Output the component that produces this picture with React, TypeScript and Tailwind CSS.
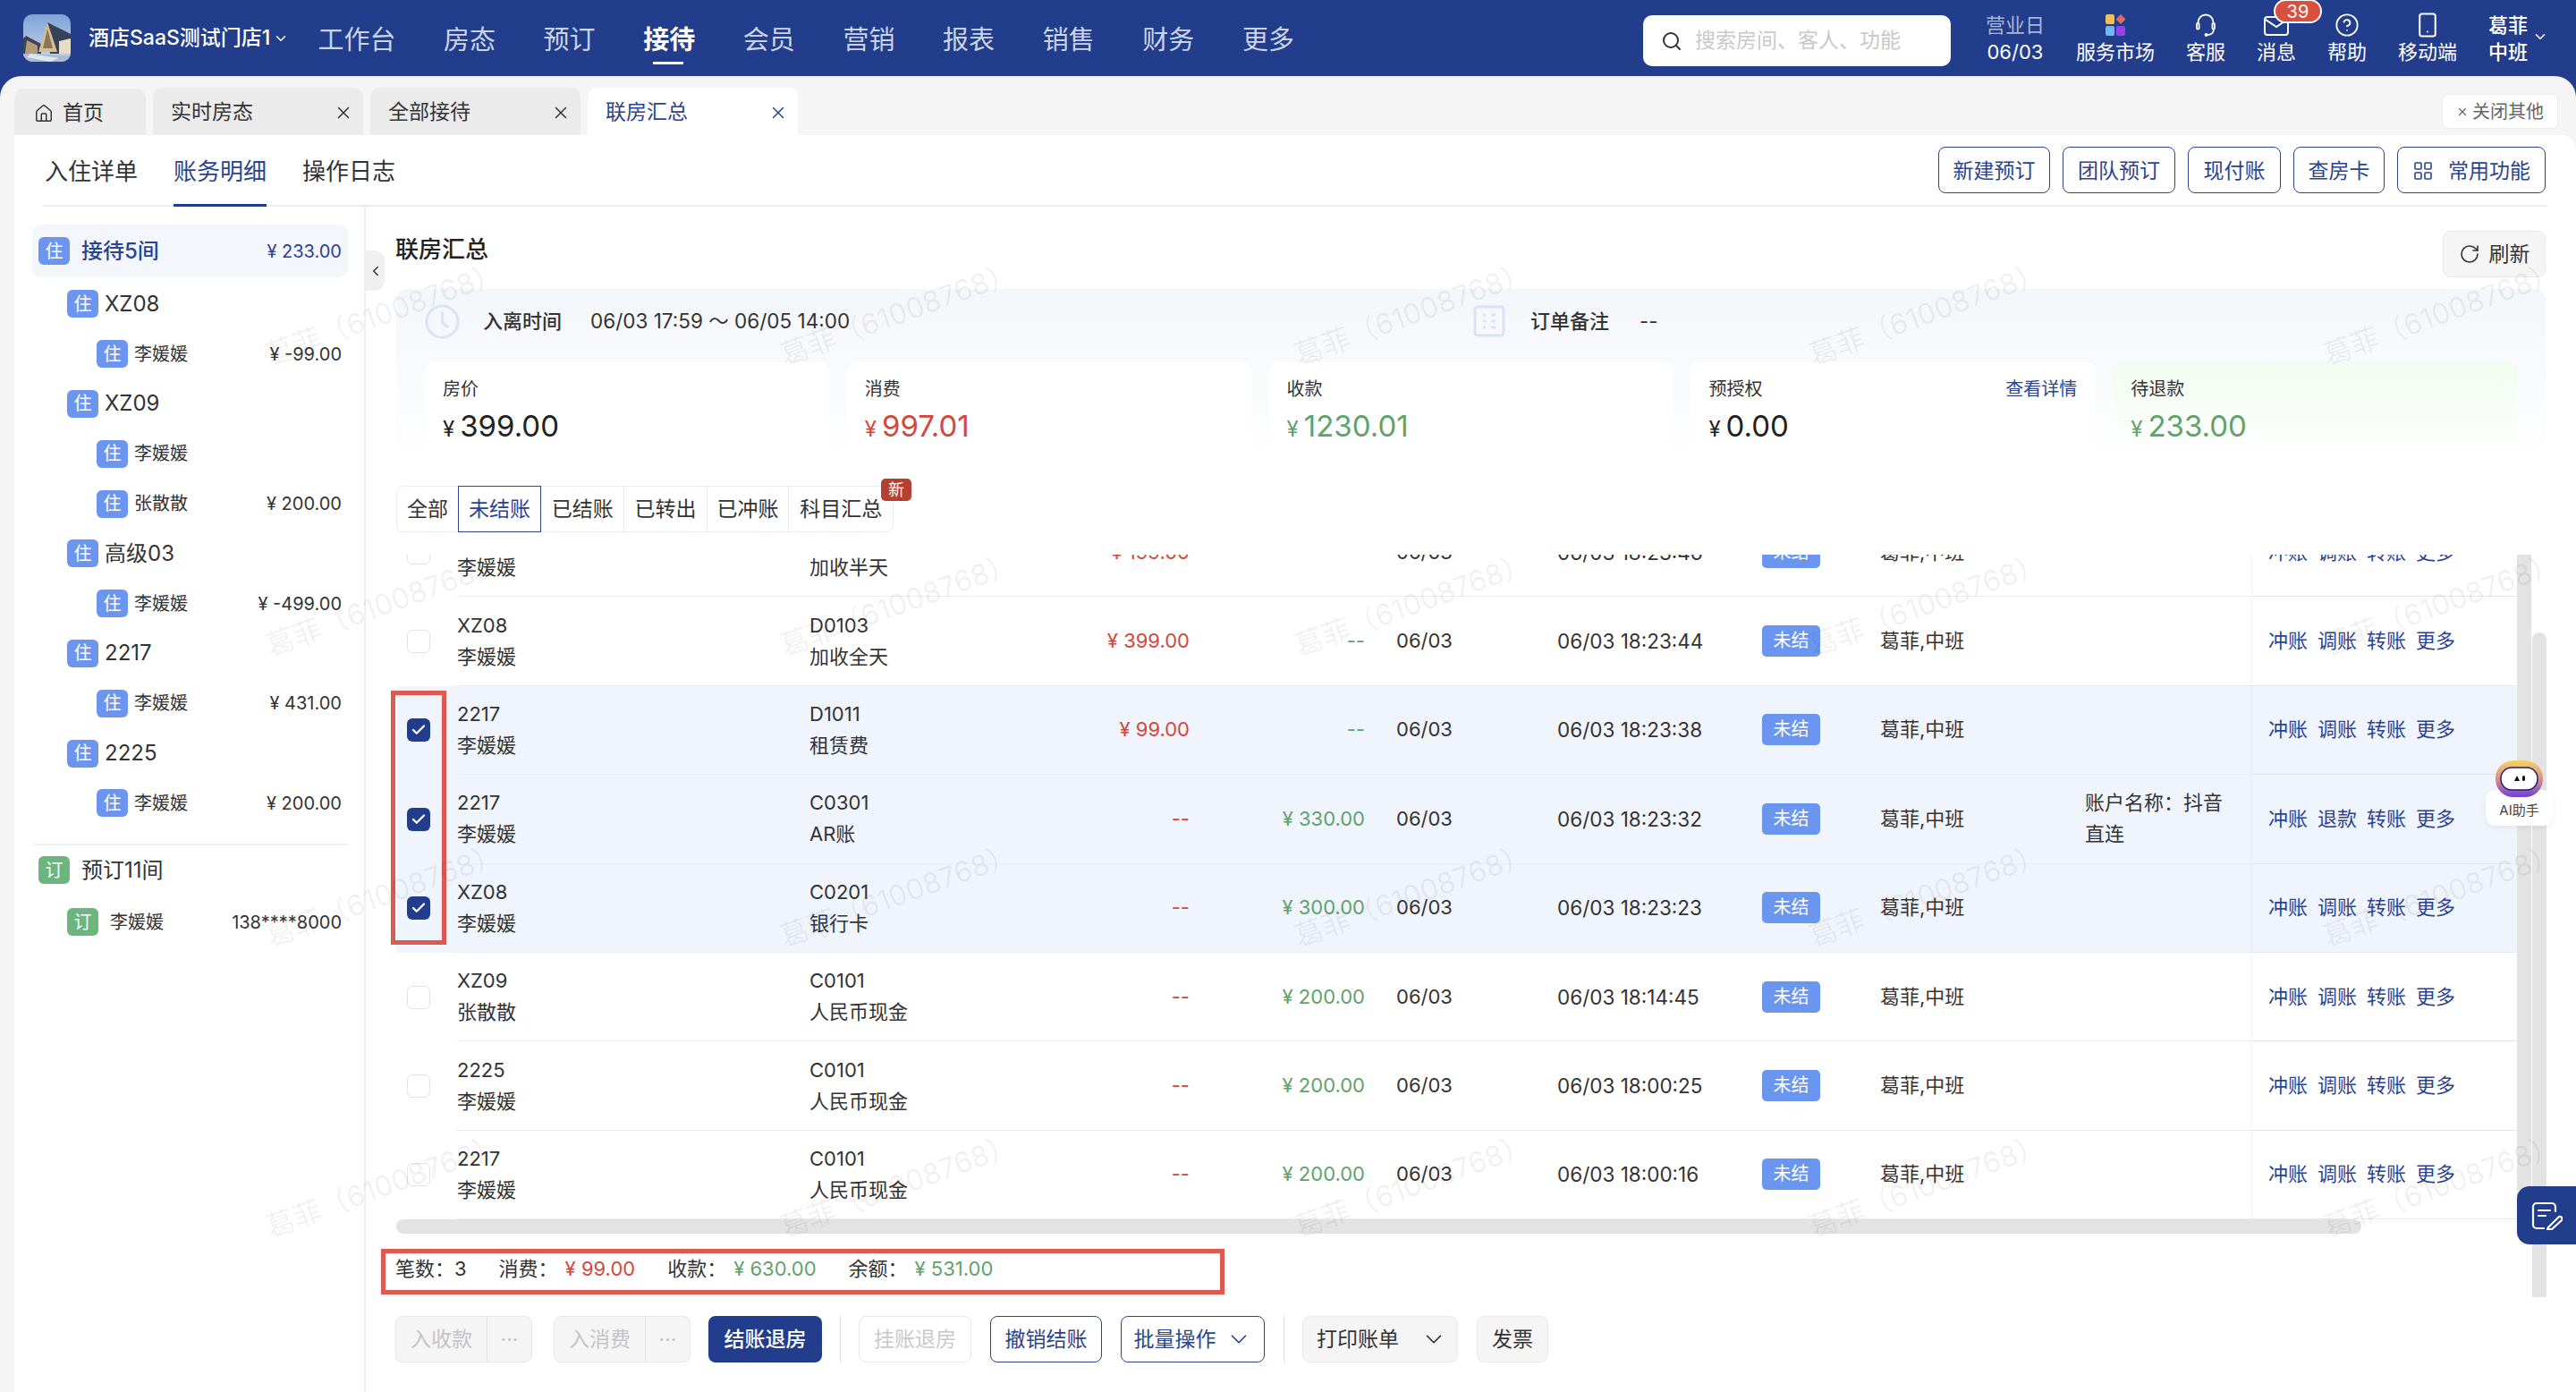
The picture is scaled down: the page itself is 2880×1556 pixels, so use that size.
import { ChevronDown, ChevronLeft, CircleHelp, Check, Home, LayoutGrid, RotateCw, Search, Smartphone, X } from "lucide-react";
import clsx from "clsx";

const navItems = ["工作台", "房态", "预订", "接待", "会员", "营销", "报表", "销售", "财务", "更多"];

interface GuestRow {
  level: number;
  name: string;
  amount?: string;
}

const guests: GuestRow[] = [
  { level: 1, name: "XZ08" },
  { level: 2, name: "李媛媛", amount: "¥ -99.00" },
  { level: 1, name: "XZ09" },
  { level: 2, name: "李媛媛" },
  { level: 2, name: "张散散", amount: "¥ 200.00" },
  { level: 1, name: "高级03" },
  { level: 2, name: "李媛媛", amount: "¥ -499.00" },
  { level: 1, name: "2217" },
  { level: 2, name: "李媛媛", amount: "¥ 431.00" },
  { level: 1, name: "2225" },
  { level: 2, name: "李媛媛", amount: "¥ 200.00" },
];

interface Bill {
  room: string;
  guest: string;
  code: string;
  item: string;
  consume: string;
  pay: string;
  time: string;
  note?: string;
  refund?: boolean;
  selected?: boolean;
}

const bills: Bill[] = [
  { room: "XZ08", guest: "李媛媛", code: "D0102", item: "加收半天", consume: "¥ 199.00", pay: "--", time: "06/03 18:23:46" },
  { room: "XZ08", guest: "李媛媛", code: "D0103", item: "加收全天", consume: "¥ 399.00", pay: "--", time: "06/03 18:23:44" },
  { room: "2217", guest: "李媛媛", code: "D1011", item: "租赁费", consume: "¥ 99.00", pay: "--", time: "06/03 18:23:38", selected: true },
  { room: "2217", guest: "李媛媛", code: "C0301", item: "AR账", consume: "--", pay: "¥ 330.00", time: "06/03 18:23:32", note: "账户名称：抖音直连", refund: true, selected: true },
  { room: "XZ08", guest: "李媛媛", code: "C0201", item: "银行卡", consume: "--", pay: "¥ 300.00", time: "06/03 18:23:23", selected: true },
  { room: "XZ09", guest: "张散散", code: "C0101", item: "人民币现金", consume: "--", pay: "¥ 200.00", time: "06/03 18:14:45" },
  { room: "2225", guest: "李媛媛", code: "C0101", item: "人民币现金", consume: "--", pay: "¥ 200.00", time: "06/03 18:00:25" },
  { room: "2217", guest: "李媛媛", code: "C0101", item: "人民币现金", consume: "--", pay: "¥ 200.00", time: "06/03 18:00:16" },
];

const Tag = ({ text, green }: { text: string; green?: boolean }) => (
  <span
    className={clsx(
      "flex h-[31px] w-[35px] shrink-0 items-center justify-center rounded-[6px] text-[20px] text-white",
      green ? "bg-[#6cb57f]" : "bg-[#6b95ee]"
    )}
  >
    {text}
  </span>
);

const LogoPicture = () => (
  <svg viewBox="0 0 53 53" className="h-[53px] w-[53px] rounded-[10px]">
    <defs>
      <linearGradient id="sky" x1="0" y1="0" x2="0" y2="1">
        <stop offset="0" stopColor="#7fa3d8" />
        <stop offset="1" stopColor="#c9d6e6" />
      </linearGradient>
    </defs>
    <rect width="53" height="53" fill="url(#sky)" />
    <path d="M3 24 L20 33 L20 44 L0 44 L0 27 Z" fill="#3d4658" />
    <path d="M4 29 L16 35 L16 44 L2 44 Z" fill="#b59a78" />
    <path d="M27 9 L53 22 L53 44 L30 44 Z" fill="#37415a" />
    <path d="M27 9 L17 42 L38 42 Z" fill="#d9bd92" />
    <path d="M27 16 L22 38 L33 38 Z" fill="#8e7457" />
    <path d="M40 30 L53 27 L53 44 L40 44 Z" fill="#e8dcc4" />
    <path d="M0 44 L53 46 L53 53 L0 53 Z" fill="#a8bbd0" />
    <path d="M8 44 L40 49 L30 53 L4 48 Z" fill="#dde6ee" />
  </svg>
);

const MarketIcon = () => (
  <svg viewBox="0 0 24 24" className="h-[24px] w-[24px]">
    <rect x="1" y="0" width="10" height="11" rx="2" fill="#efc05c" />
    <path d="M18 0 L23.5 5.5 L18 11 L12.5 5.5 Z" fill="#e26b63" />
    <rect x="1" y="13" width="10" height="11" rx="2" fill="#6db8f7" />
    <rect x="13" y="13" width="10" height="11" rx="2" fill="#9b3df0" />
  </svg>
);

const HeadsetIcon = () => (
  <svg viewBox="0 0 24 26" fill="none" stroke="white" strokeWidth="1.8" strokeLinecap="round" className="h-[26px] w-[24px]">
    <path d="M3.5 11V10a8.5 8.5 0 0 1 17 0v1" />
    <rect x="2" y="11" width="2.6" height="6.5" rx="1.3" />
    <rect x="19.4" y="11" width="2.6" height="6.5" rx="1.3" />
    <path d="M21 17.5c0 4-3 6.5-7.5 6.5" />
    <circle cx="12.5" cy="24" r="1" fill="white" />
  </svg>
);

const TopItem = ({ icon, label }: { icon: React.ReactNode; label: string }) => (
  <div className="flex h-[85px] flex-col items-center pt-[13px]">
    <div className="flex h-[30px] items-center justify-center">{icon}</div>
    <span className="text-[22px] leading-[30px] text-white">{label}</span>
  </div>
);

const Header = () => (
  <header className="flex h-[85px] shrink-0 items-center bg-[#223d8b] pr-[54px] pl-[26px]">
    <LogoPicture />
    <span className="ml-[20px] text-[23px] font-medium text-white">酒店SaaS测试门店1</span>
    <ChevronDown className="ml-[3px] h-[18px] w-[18px] text-white" />
    <nav className="mt-[5px] ml-[32px] flex gap-[53.6px]">
      {navItems.map((item) => (
        <div key={item} className="relative">
          <span className={clsx("text-[29px] leading-[40px]", item === "接待" ? "font-bold text-white" : "text-[#ccd5e8]")}>{item}</span>
          {item === "接待" && <span className="absolute -bottom-[7px] left-[11px] h-[3px] w-[34px] bg-white" />}
        </div>
      ))}
    </nav>
    <div className="mt-[6px] mr-[7px] ml-auto flex h-[57px] w-[344px] items-center rounded-[10px] bg-white pl-[20px]">
      <Search className="h-[24px] w-[24px] text-[#333]" />
      <span className="ml-[14px] text-[23px] text-[#c9c9c9]">搜索房间、客人、功能</span>
    </div>
    <div className="flex items-center gap-[35px]">
      <div className="ml-[32px] flex h-[85px] flex-col items-center pt-[13px]">
        <span className="text-[22px] leading-[30px] text-[#a9b6d6]">营业日</span>
        <span className="text-[22px] leading-[30px] text-white">06/03</span>
      </div>
      <TopItem icon={<MarketIcon />} label="服务市场" />
      <TopItem icon={<HeadsetIcon />} label="客服" />
      <div className="relative">
        <TopItem
          icon={
            <svg viewBox="0 0 28 22" fill="none" stroke="white" strokeWidth="2" className="mt-[2px] h-[22px] w-[28px]">
              <rect x="1" y="1" width="26" height="20" rx="3" />
              <path d="M2 4 L14 12 L26 4" />
            </svg>
          }
          label="消息"
        />
        <span className="absolute -top-[1px] left-[19px] flex h-[27px] w-[54px] items-center justify-center rounded-full border-2 border-white bg-[#d9503f] text-[20px] text-white">
          39
        </span>
      </div>
      <TopItem icon={<CircleHelp className="h-[28px] w-[28px] text-white" strokeWidth={1.6} />} label="帮助" />
      <TopItem icon={<Smartphone className="h-[36px] w-[30px] text-white" strokeWidth={1.6} />} label="移动端" />
      <div className="relative flex h-[85px] flex-col items-center pt-[13px] text-[22px] leading-[30px] font-medium text-white">
        <span>葛菲</span>
        <span>中班</span>
        <ChevronDown className="absolute top-[32px] -right-[23px] h-[18px] w-[18px]" />
      </div>
    </div>
  </header>
);

const PageTabs = () => (
  <div className="flex h-[66px] shrink-0 items-end gap-[8px] px-[16px]">
    <div className="flex h-[52px] w-[147px] items-center rounded-t-[10px] bg-[#ebebeb] pt-[3px] pl-[22px] text-[23px] text-[#333]">
      <Home className="h-[22px] w-[22px]" strokeWidth={1.6} />
      <span className="ml-[10px]">首页</span>
    </div>
    {["实时房态", "全部接待", "联房汇总"].map((tab) => (
      <div
        key={tab}
        className={clsx(
          "flex h-[53px] w-[235px] items-center justify-between rounded-t-[10px] pt-[2px] pr-[11px] pl-[20px] text-[23px]",
          tab === "联房汇总" ? "bg-white text-[#2b4390]" : "bg-[#ebebeb] text-[#333]"
        )}
      >
        <span>{tab}</span>
        <X className="h-[22px] w-[22px]" strokeWidth={1.6} />
      </div>
    ))}
    <div className="mr-[5px] mb-[8px] ml-auto flex h-[37px] w-[128px] items-center justify-center rounded-[6px] bg-white text-[20px] text-[#666] shadow-[0_0_2px_rgba(0,0,0,0.12)]">
      <X className="mr-[4px] h-[14px] w-[14px]" />
      关闭其他
    </div>
  </div>
);

const OutlineBtn = ({ children, width }: { children: React.ReactNode; width: string }) => (
  <div className={clsx("flex h-[52px] items-center justify-center rounded-[8px] border border-[#2b4390] pt-[2px] text-[23px] text-[#2b4390]", width)}>
    {children}
  </div>
);

const SubBar = () => (
  <div className="mx-[32px] flex h-[80px] shrink-0 items-center border-b-2 border-[#ececec]">
    <div className="flex h-full gap-[40px] pl-[2px]">
      {["入住详单", "账务明细", "操作日志"].map((t) => (
        <div
          key={t}
          className={clsx(
            "-mb-[2px] flex items-center border-b-[3px] pt-[3px] text-[26px]",
            t === "账务明细" ? "border-[#223d8b] text-[#2b4390]" : "border-transparent text-[#333]"
          )}
        >
          {t}
        </div>
      ))}
    </div>
    <div className="mr-[2px] ml-auto flex gap-[14px]">
      <OutlineBtn width="w-[125px]">新建预订</OutlineBtn>
      <OutlineBtn width="w-[126px]">团队预订</OutlineBtn>
      <OutlineBtn width="w-[104px]">现付账</OutlineBtn>
      <OutlineBtn width="w-[102px]">查房卡</OutlineBtn>
      <OutlineBtn width="w-[166px]">
        <LayoutGrid className="mr-[16px] h-[24px] w-[24px]" strokeWidth={1.6} />
        常用功能
      </OutlineBtn>
    </div>
  </div>
);

const Sidebar = () => (
  <aside className="w-[393px] shrink-0 border-r-2 border-[#f0f0f0] pt-[20px] pr-[18px] pl-[20px]">
    <div className="mb-[2px] flex h-[59px] items-center rounded-[10px] bg-[#f3f6fb] px-[7px]">
      <Tag text="住" />
      <span className="ml-[13px] text-[24px] font-medium text-[#2b4390]">接待5间</span>
      <span className="ml-auto text-[20px] text-[#2b4390]">¥ 233.00</span>
    </div>
    {guests.map((g, i) => (
      <div key={i} className={clsx("flex h-[55.8px] items-center pr-[7px]", g.level === 1 ? "pl-[39px]" : "pl-[72px]")}>
        <Tag text="住" />
        <span className={clsx("ml-[7px] text-[#333]", g.level === 1 ? "text-[24px]" : "text-[20px]")}>{g.name}</span>
        {g.amount && <span className="ml-auto text-[20px] text-[#333]">{g.amount}</span>}
      </div>
    ))}
    <div className="mt-[17px] flex h-[58px] items-center border-t-2 border-[#f2f2f2] pl-[7px]">
      <Tag text="订" green />
      <span className="ml-[13px] text-[24px] text-[#333]">预订11间</span>
    </div>
    <div className="flex h-[60px] items-center pr-[7px] pl-[39px]">
      <Tag text="订" green />
      <span className="ml-[13px] text-[20px] text-[#333]">李媛媛</span>
      <span className="ml-auto text-[20px] text-[#333]">138****8000</span>
    </div>
  </aside>
);

const StatCard = ({ label, value, color, green, link }: { label: string; value: string; color: string; green?: boolean; link?: boolean }) => (
  <div className={clsx("h-[108px] flex-1 rounded-t-[10px] px-[20px] pt-[18px]", green ? "bg-gradient-to-b from-[#f2fcf0] to-white" : "bg-white")}>
    <div className="flex items-center justify-between text-[20px] leading-[24px] text-[#333]">
      <span>{label}</span>
      {link && <span className="text-[#2b4390]">查看详情</span>}
    </div>
    <div className={clsx("mt-[7px] flex items-baseline", color)}>
      <span className="mr-[6px] text-[24px]">¥</span>
      <span className="text-[33px] leading-[44px]">{value}</span>
    </div>
  </div>
);

const InfoBlock = () => (
  <div className="mx-[34px] mt-[13px] h-[190px] shrink-0 rounded-t-[12px] bg-gradient-to-b from-[#f3f6fa] to-white px-[32px]">
    <div className="flex h-[82px] items-center pb-[10px] text-[22px] text-[#333]">
      <svg viewBox="0 0 40 40" fill="none" stroke="#dbe3f1" strokeWidth="3" className="h-[39px] w-[39px]">
        <circle cx="20" cy="20" r="18" />
        <path d="M20 10v11l6 5" strokeLinecap="round" />
      </svg>
      <span className="ml-[26px] font-medium">入离时间</span>
      <span className="ml-[32px] w-[294px] text-[22.5px]">06/03 17:59 ～ 06/05 14:00</span>
      <svg viewBox="0 0 36 36" fill="none" stroke="#dbe3f1" strokeWidth="3" className="ml-[693px] h-[36px] w-[36px]">
        <rect x="2" y="2" width="32" height="32" rx="3" />
        <path d="M11 11h3M11 18h3M11 25h3M20 11h5M20 18h5M20 25h5" />
      </svg>
      <span className="ml-[28px] font-medium">订单备注</span>
      <span className="ml-[34px]">--</span>
    </div>
    <div className="flex gap-[20px]">
      <StatCard label="房价" value="399.00" color="text-[#222]" />
      <StatCard label="消费" value="997.01" color="text-[#d4473a]" />
      <StatCard label="收款" value="1230.01" color="text-[#5fa36b]" />
      <StatCard label="预授权" value="0.00" color="text-[#222]" link />
      <StatCard label="待退款" value="233.00" color="text-[#5fa36b]" green />
    </div>
  </div>
);

const FilterTabs = () => (
  <div className="relative mt-[30px] ml-[34px] flex h-[52px] w-[556px] shrink-0 rounded-[8px] border border-[#ececec] text-[23px] text-[#333]">
    <div className="flex w-[68px] items-center justify-center">全部</div>
    <div className="-my-px flex w-[94px] items-center justify-center border border-[#2b4390] text-[#2b4390]">未结账</div>
    <div className="flex w-[93px] items-center justify-center border-r border-[#ececec]">已结账</div>
    <div className="flex w-[93px] items-center justify-center border-r border-[#ececec]">已转出</div>
    <div className="flex w-[92px] items-center justify-center border-r border-[#ececec]">已冲账</div>
    <div className="flex w-[116px] items-center justify-center">科目汇总</div>
    <span className="absolute -top-[9px] left-[541px] flex h-[25px] w-[34px] items-center justify-center rounded-[5px] bg-[#b5402f] text-[18px] text-white">
      新
    </span>
  </div>
);

const BillRow = ({ bill }: { bill: Bill }) => (
  <div className={clsx("flex h-[99.4px] items-center text-[22px] leading-[35px] text-[#333]", bill.selected ? "bg-[#f0f4fd]" : "bg-white")}>
    <div className="flex h-full w-[68px] shrink-0 items-center pl-[12px]">
      {bill.selected ? (
        <span className="flex h-[26px] w-[26px] items-center justify-center rounded-[6px] bg-[#223d8b]">
          <Check className="h-[18px] w-[18px] text-white" strokeWidth={3} />
        </span>
      ) : (
        <span className="h-[26px] w-[26px] rounded-[6px] border border-[#e3e3e3] bg-white" />
      )}
    </div>
    <div className={clsx("flex h-full flex-1 items-center border-b", bill.selected ? "border-[#e9edf7]" : "border-[#ececec]")}>
      <div className="w-[394px] shrink-0">
        <div>{bill.room}</div>
        <div>{bill.guest}</div>
      </div>
      <div className="w-[250px] shrink-0">
        <div>{bill.code}</div>
        <div>{bill.item}</div>
      </div>
      <div className="w-[175px] shrink-0 text-right text-[#d4473a]">{bill.consume}</div>
      <div className="w-[196px] shrink-0 text-right text-[#5fa36b]">{bill.pay}</div>
      <div className="w-[214px] shrink-0 pl-[35px]">06/03</div>
      <div className="w-[230px] shrink-0 pl-[1px] text-[22.5px]">{bill.time}</div>
      <div className="w-[132px] shrink-0">
        <span className="flex h-[35px] w-[65px] items-center justify-center rounded-[5px] bg-[#6a96ef] text-[20px] text-white">未结</span>
      </div>
      <div className="w-[229px] shrink-0">葛菲,中班</div>
      <div className="w-[188px] shrink-0 pr-[20px]">{bill.note}</div>
      <div className="flex h-full w-[295px] shrink-0 items-center gap-[11px] pl-[17px] text-[#2b4390] shadow-[-3px_0_4px_rgba(0,0,0,0.03)]">
        <span>冲账</span>
        <span>{bill.refund ? "退款" : "调账"}</span>
        <span>转账</span>
        <span>更多</span>
      </div>
    </div>
  </div>
);

const BillTable = () => (
  <div className="relative mt-[25px] ml-[34px] shrink-0">
    <div className="flex h-[743px]">
      <div className="w-[2371px] overflow-hidden">
        <div className="-mt-[52px]">
          {bills.map((b, i) => (
            <BillRow key={i} bill={b} />
          ))}
        </div>
      </div>
      <div className="w-[16px] bg-[#e3e3e3]" />
    </div>
    <div className="h-[16px] w-[2197px] rounded-full bg-[#e3e3e3]" />
    <div className="absolute top-[152px] -left-[6px] h-[284px] w-[62px] border-[5px] border-[#dd5a52]" />
  </div>
);

const Summary = () => (
  <div className="mt-[17px] ml-[17px] flex h-[51px] w-[943px] shrink-0 items-center gap-[36px] border-[5px] border-[#dd5a52] pb-[7px] pl-[11px] text-[22px] text-[#333]">
    <span>笔数：3</span>
    <span>
      消费：<span className="ml-[8px] text-[#d4473a]">¥ 99.00</span>
    </span>
    <span>
      收款：<span className="ml-[8px] text-[#5fa36b]">¥ 630.00</span>
    </span>
    <span>
      余额：<span className="ml-[8px] text-[#5fa36b]">¥ 531.00</span>
    </span>
  </div>
);

const SplitDisabled = ({ label }: { label: string }) => (
  <div className="flex h-[52px] w-[153px] rounded-[8px] border border-[#e8e8e8] bg-[#f5f5f5] text-[23px] text-[#c4c4c4]">
    <span className="flex w-[102px] items-center justify-center border-r border-[#e4e4e4]">{label}</span>
    <span className="flex flex-1 items-center justify-center">···</span>
  </div>
);

const ActionBar = () => (
  <div className="mt-[24px] ml-[33px] flex h-[52px] shrink-0 items-center text-[23px]">
    <SplitDisabled label="入收款" />
    <div className="ml-[24px]">
      <SplitDisabled label="入消费" />
    </div>
    <div className="ml-[20px] flex h-[52px] w-[127px] items-center justify-center rounded-[8px] bg-[#223d8b] font-medium text-white">结账退房</div>
    <div className="ml-[20px] h-[52px] w-px bg-[#e0e0e0]" />
    <div className="ml-[20px] flex h-[52px] w-[126px] items-center justify-center rounded-[8px] border border-[#e8e8e8] text-[#c9c9c9]">挂账退房</div>
    <div className="ml-[21px] flex h-[52px] w-[125px] items-center justify-center rounded-[8px] border border-[#2b4390] text-[#2b4390]">撤销结账</div>
    <div className="ml-[21px] flex h-[52px] w-[161px] items-center justify-center gap-[10px] rounded-[8px] border border-[#2b4390] text-[#2b4390]">
      批量操作
      <ChevronDown className="h-[30px] w-[30px]" strokeWidth={1.4} />
    </div>
    <div className="ml-[21px] h-[52px] w-px bg-[#e0e0e0]" />
    <div className="ml-[20px] flex h-[52px] w-[174px] items-center justify-center gap-[24px] rounded-[8px] border border-[#ebebeb] bg-[#f5f5f5] pl-[4px] text-[#333]">
      打印账单
      <ChevronDown className="h-[30px] w-[30px]" strokeWidth={1.4} />
    </div>
    <div className="ml-[21px] flex h-[52px] w-[80px] items-center justify-center rounded-[8px] border border-[#ebebeb] bg-[#f5f5f5] text-[#333]">发票</div>
  </div>
);

const Watermarks = () => (
  <div className="pointer-events-none absolute top-[188px] left-[142px] z-10 grid grid-cols-[repeat(5,575px)] auto-rows-[325px]">
    {Array.from({ length: 20 }).map((_, i) => (
      <div key={i} className="flex items-center justify-center">
        <span className="-rotate-[20deg] text-[32px] whitespace-nowrap text-black/[0.06]">葛菲（61008768）</span>
      </div>
    ))}
  </div>
);

const Floaters = () => (
  <>
    <div className="absolute top-[707px] left-[2831px] z-0 h-[743px] w-[16px] rounded-t-full bg-[#e3e3e3]" />
    <div className="absolute top-[849px] left-[2779px] z-20 flex w-[75px] flex-col items-center">
      <svg viewBox="0 0 55 43" className="relative z-10 h-[43px] w-[55px]">
        <defs>
          <linearGradient id="halo" x1="0" y1="0" x2="0" y2="1">
            <stop offset="0" stopColor="#f3d469" />
            <stop offset="0.55" stopColor="#d58a8a" />
            <stop offset="1" stopColor="#6a3fe0" />
          </linearGradient>
        </defs>
        <rect x="1" y="1" width="53" height="41" rx="20" fill="url(#halo)" />
        <rect x="7" y="9" width="41" height="25" rx="12" fill="white" stroke="#2a1a66" strokeWidth="1.5" />
        <path d="M22 24 L25 18 L28 24 Z" fill="#111" />
        <rect x="31" y="18" width="3" height="6" rx="1.5" fill="#111" />
      </svg>
      <div className="-mt-[9px] flex h-[40px] w-[75px] items-end justify-center rounded-[10px] bg-white pb-[6px] text-[15px] text-[#444] shadow-[0_2px_6px_rgba(0,0,0,0.06)]">
        AI助手
      </div>
    </div>
    <div className="absolute top-[1326px] left-[2814px] z-20 flex h-[65px] w-[66px] items-center justify-center rounded-l-[14px] bg-[#223d8b]">
      <svg viewBox="0 0 36 32" fill="none" stroke="white" strokeWidth="2.2" strokeLinecap="round" strokeLinejoin="round" className="h-[32px] w-[36px]">
        <path d="M28 11V6a4 4 0 0 0-4-4H7a4 4 0 0 0-4 4v20a4 4 0 0 0 4 4h8" />
        <path d="M9 10h13M9 16h8" />
        <path d="M20 29 L31 18 a2.5 2.5 0 0 1 4 3 L24 31 L19 31 Z" />
      </svg>
    </div>
  </>
);

export default function App() {
  return (
    <div className="relative flex h-[1556px] w-[2880px] flex-col overflow-hidden bg-[#223d8b] [font-family:Inter,'Noto_Sans_CJK_SC',sans-serif]">
      <Header />
      <main className="flex flex-1 flex-col rounded-t-[24px] bg-[#f5f5f5]">
        <PageTabs />
        <div className="ml-[16px] flex flex-1 flex-col rounded-tr-[16px] bg-white">
          <SubBar />
          <div className="flex flex-1">
            <Sidebar />
            <section className="relative flex flex-1 flex-col">
              <div className="absolute top-[49px] left-0 flex h-[45px] w-[21px] items-center justify-center rounded-r-[12px] bg-[#f0f0f0] text-[#333]">
                <ChevronLeft className="h-[18px] w-[18px]" />
              </div>
              <div className="flex h-[79px] shrink-0 items-end justify-between pr-[34px] pl-[33px]">
                <span className="mb-[12px] text-[26px] font-medium text-[#222]">联房汇总</span>
                <div className="flex h-[52px] w-[115px] items-center justify-center gap-[10px] rounded-[8px] border border-[#ebebeb] bg-[#f5f5f5] text-[23px] text-[#333]">
                  <RotateCw className="h-[24px] w-[24px]" strokeWidth={1.6} />
                  刷新
                </div>
              </div>
              <InfoBlock />
              <FilterTabs />
              <BillTable />
              <Summary />
              <ActionBar />
            </section>
          </div>
        </div>
      </main>
      <Watermarks />
      <Floaters />
    </div>
  );
}
